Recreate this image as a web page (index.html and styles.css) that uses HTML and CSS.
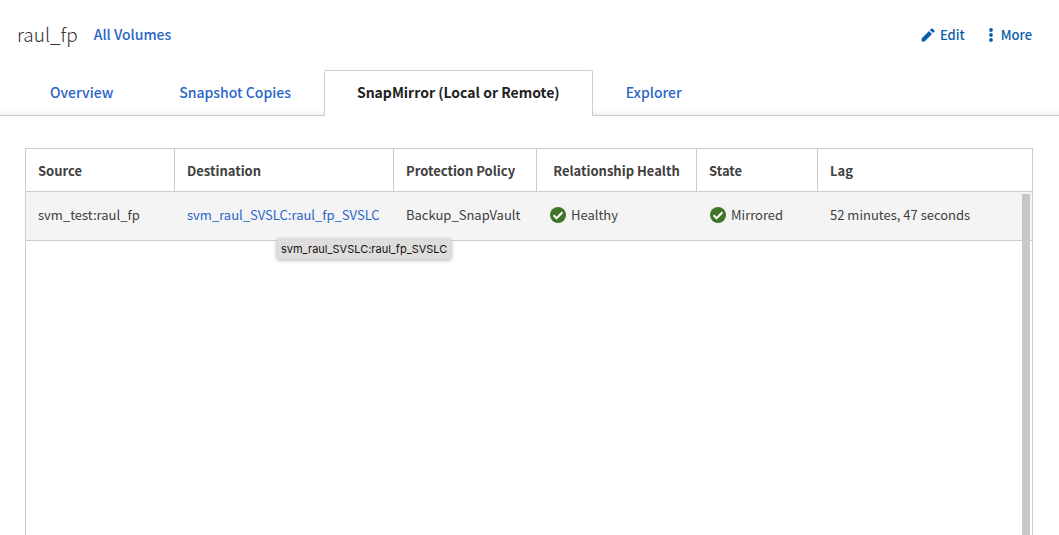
FILE: index.html
```html
<!DOCTYPE html>
<html lang="en">
<head>
<meta charset="utf-8">
<meta name="viewport" content="width=device-width, initial-scale=1">
<title>raul_fp</title>
<link rel="stylesheet" href="styles.css">
</head>
<body>
<header class="header">
  <h1 class="title">raul_fp</h1>
  <a class="all-link" href="#volumes">All Volumes</a>
  <div class="actions">
    <button class="action" type="button">
      <svg class="icon-edit" viewBox="0 0 14 14" aria-hidden="true"><path d="M.6 10.4 8 3l3 3-7.400 7.400H.6zM8.900 2.100l1.300-1.300a1.100 1.100 0 0 1 1.600 0l1.400 1.400a1.100 1.100 0 0 1 0 1.600l-1.300 1.300z"/></svg>
      Edit
    </button>
    <button class="action" type="button">
      <svg class="icon-more" viewBox="0 0 4 14" aria-hidden="true"><circle cx="2" cy="2" r="1.9"/><circle cx="2" cy="7" r="1.9"/><circle cx="2" cy="12" r="1.9"/></svg>
      More
    </button>
  </div>
</header>
<nav class="tabs">
  <a class="tab" href="#overview">Overview</a>
  <a class="tab" href="#snapshots">Snapshot Copies</a>
  <a class="tab tab-active" href="#snapmirror" aria-current="page">SnapMirror (Local or Remote)</a>
  <a class="tab" href="#explorer">Explorer</a>
</nav>
<main class="grid">
  <table class="table">
    <colgroup>
      <col class="col-source"><col class="col-destination"><col class="col-policy"><col class="col-health"><col class="col-state"><col>
    </colgroup>
    <thead>
      <tr>
        <th>Source</th>
        <th>Destination</th>
        <th>Protection Policy</th>
        <th class="centered">Relationship Health</th>
        <th>State</th>
        <th>Lag</th>
      </tr>
    </thead>
    <tbody>
      <tr>
        <td>svm_test:raul_fp</td>
        <td><div class="destination"><a class="destination-link" href="#destination" aria-describedby="tip">svm_raul_SVSLC:raul_fp_SVSLC</a><span class="tooltip" id="tip" role="tooltip">svm_raul_SVSLC:raul_fp_SVSLC</span></div></td>
        <td>Backup_SnapVault</td>
        <td><div class="status"><svg class="icon-ok" viewBox="0 0 16 16" aria-hidden="true"><circle cx="8" cy="8" r="8"/><path d="m3.600 8.300 3 3 5.800-6"/></svg>Healthy</div></td>
        <td><div class="status"><svg class="icon-ok" viewBox="0 0 16 16" aria-hidden="true"><circle cx="8" cy="8" r="8"/><path d="m3.600 8.300 3 3 5.800-6"/></svg>Mirrored</div></td>
        <td>52 minutes, 47 seconds</td>
      </tr>
    </tbody>
  </table>
  <div class="scrollbar"></div>
</main>
</body>
</html>
```
FILE: styles.css
```css
* {
  box-sizing: border-box;
}

body {
  margin: 0;
  min-height: 100vh;
  display: flex;
  flex-direction: column;
  background: #fff;
  color: #404040;
  font-family: "Noto Sans CJK SC", "Open Sans", sans-serif;
  font-size: 13px;
  line-height: 20px;
}

a {
  color: #2a66c8;
  font-weight: 500;
  text-decoration: none;
}

.header {
  display: flex;
  align-items: center;
  gap: 16px;
  height: 70px;
  padding: 0 27px 2px 17px;
}

.title {
  margin: 0;
  color: #333;
  font-size: 19px;
  font-weight: 300;
  line-height: 28px;
}

.all-link {
  font-size: 14px;
}

.actions {
  display: flex;
  gap: 24px;
  margin-left: auto;
  padding-top: 2px;
}

.action {
  display: flex;
  align-items: center;
  gap: 5px;
  padding: 0;
  border: 0;
  background: none;
  color: #0b5cab;
  font: inherit;
  font-weight: 500;
  cursor: pointer;
}

.action svg {
  fill: currentColor;
}

.icon-edit {
  width: 14px;
  height: 14px;
}

.icon-more {
  width: 4px;
  height: 14px;
  margin-right: 3px;
}

.tabs {
  display: flex;
  height: 46px;
  padding-left: 17px;
  border-bottom: 1px solid #ccc;
  background: linear-gradient(#fff 40px, #f0f0f0);
}

.tab {
  height: 46px;
  padding: 11px 32px;
  border: 1px solid transparent;
  border-bottom: 0;
  font-size: 14px;
}

.tab-active {
  border-color: #ccc;
  border-radius: 2px 2px 0 0;
  background: #fff;
  color: #222;
  font-weight: 700;
}

.grid {
  position: relative;
  flex: 1;
  margin: 32px 26px 0 25px;
  border: 1px solid #ccc;
  border-bottom: 0;
}

.table {
  width: 100%;
  table-layout: fixed;
  border-collapse: separate;
  border-spacing: 0;
}

.col-source { width: 149px; }
.col-destination { width: 219px; }
.col-policy { width: 143px; }
.col-health { width: 160px; }
.col-state { width: 121px; }

.table th,
.table td {
  padding: 0 12px;
  border-bottom: 1px solid #ccc;
  text-align: left;
  white-space: nowrap;
}

.table th {
  height: 43px;
  padding-top: 2px;
  border-right: 1px solid #ccc;
  font-weight: 700;
}

.table th:last-child {
  border-right: 0;
}

.table .centered {
  text-align: center;
}

.table td {
  height: 49px;
  padding-bottom: 2px;
  background: #f4f4f4;
}

.destination {
  position: relative;
}

.destination-link {
  font-weight: 400;
}

.tooltip {
  position: absolute;
  top: 34px;
  left: 90px;
  padding: 0 4px;
  border-radius: 2px;
  background: #dedddc;
  box-shadow: 0 1px 4px rgba(0, 0, 0, 0.35);
  color: #111;
  font-family: Inter, sans-serif;
  font-size: 11px;
}

.status {
  display: flex;
  align-items: center;
  gap: 5px;
  padding-left: 1px;
}

.icon-ok {
  width: 16px;
  height: 16px;
  fill: #3f7528;
}

.icon-ok path {
  fill: none;
  stroke: #fff;
  stroke-width: 2;
}

.scrollbar {
  position: absolute;
  top: 45px;
  right: 2px;
  bottom: 0;
  width: 8px;
  background: #c8c8c8;
}
```
